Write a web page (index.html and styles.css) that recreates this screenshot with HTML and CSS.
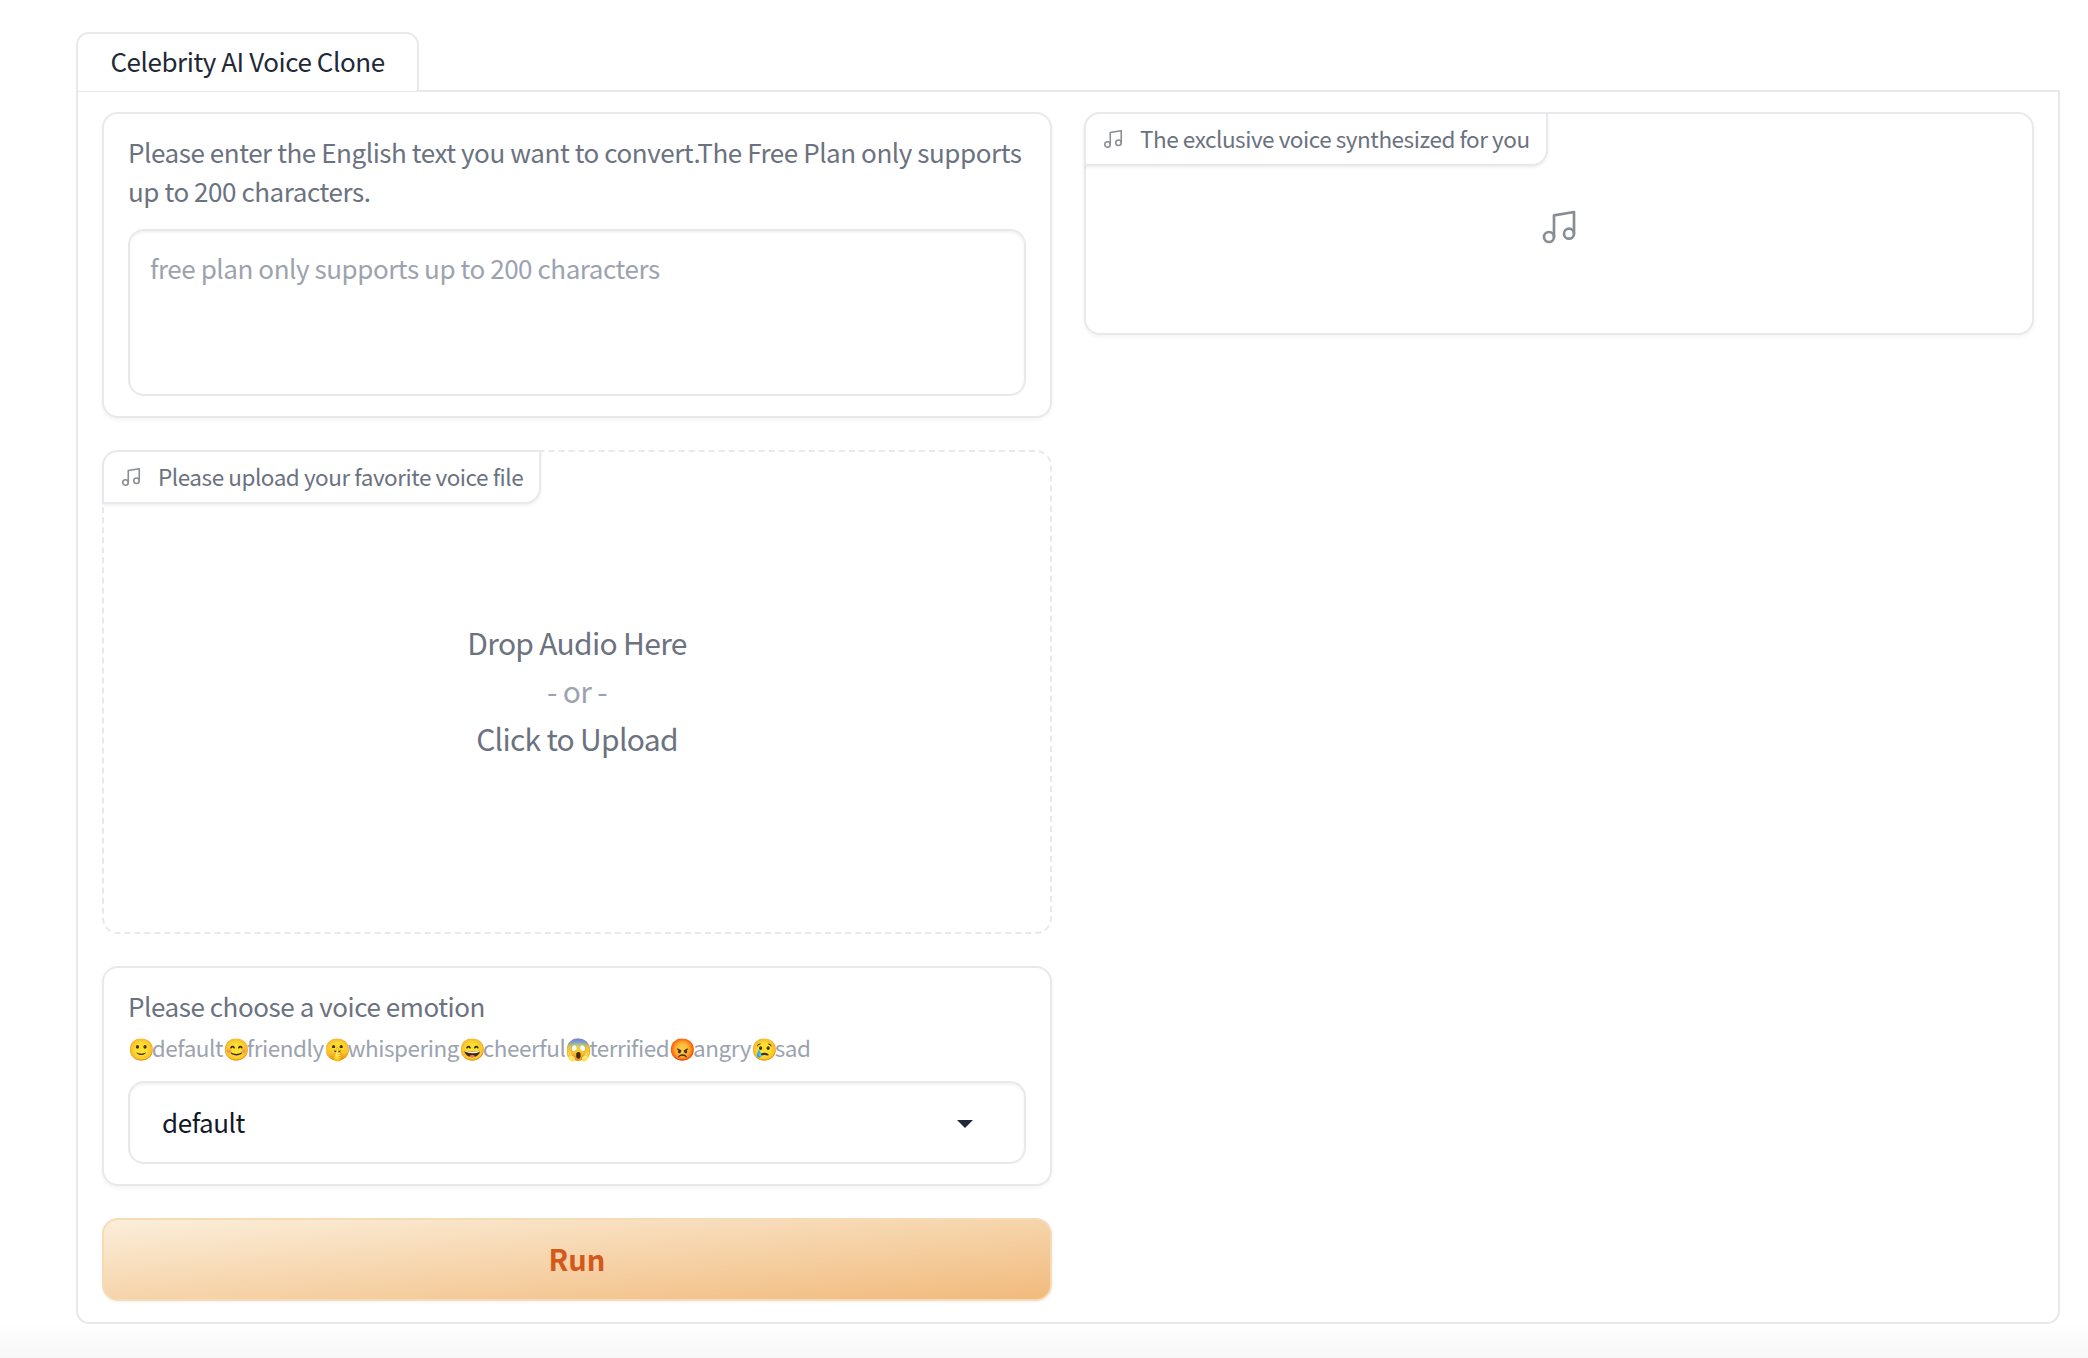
FILE: index.html
```html
<!DOCTYPE html>
<html lang="en">
<head>
<meta charset="utf-8">
<title>Celebrity AI Voice Clone</title>
<link rel="stylesheet" href="styles.css">
</head>
<body>
<main class="app">
  <nav class="tabs"><button class="tab">Celebrity AI Voice Clone</button></nav>
  <section class="panel">
    <div class="col">
      <div class="card text-card">
        <label class="label">Please enter the English text you want to convert.The Free Plan only supports up to 200 characters.</label>
        <textarea class="input" placeholder="free plan only supports up to 200 characters"></textarea>
      </div>
      <div class="card upload">
        <div class="badge">
          <svg class="note-sm" viewBox="0 0 24 24"><path d="M9 18V5l12-2v13"/><circle cx="6" cy="18" r="3"/><circle cx="18" cy="16" r="3"/></svg>
          <span>Please upload your favorite voice file</span>
        </div>
        <div class="drop">
          <div>Drop Audio Here</div>
          <div class="or">- or -</div>
          <div>Click to Upload</div>
        </div>
      </div>
      <div class="card emotion">
        <div class="label">Please choose a voice emotion</div>
        <div class="info"><span class="emoji">🙂</span>default<span class="emoji">😊</span>friendly<span class="emoji">🤫</span>whispering<span class="emoji">😄</span>cheerful<span class="emoji">😱</span>terrified<span class="emoji">😡</span>angry<span class="emoji">😢</span>sad</div>
        <div class="select"><span>default</span><i class="caret"></i></div>
      </div>
      <button class="run">Run</button>
    </div>
    <div class="col">
      <div class="card output">
        <div class="badge">
          <svg class="note-sm" viewBox="0 0 24 24"><path d="M9 18V5l12-2v13"/><circle cx="6" cy="18" r="3"/><circle cx="18" cy="16" r="3"/></svg>
          <span>The exclusive voice synthesized for you</span>
        </div>
        <div class="empty">
          <svg class="note-lg" viewBox="0 0 24 24"><path d="M9 18V5l12-2v13"/><circle cx="6" cy="18" r="3"/><circle cx="18" cy="16" r="3"/></svg>
        </div>
      </div>
    </div>
  </section>
</main>
</body>
</html>
```
FILE: styles.css
```css
* { box-sizing: border-box; }
html, body { margin: 0; height: 100%; }
body {
  height: 1358px;
  overflow: hidden;
  background: linear-gradient(to bottom, #fff 0, #fff 1323px, #f7f7f7 1358px);
  font-family: "Noto Sans CJK SC", "Noto Sans", sans-serif;
  color: #6b7280;
}
.app { padding: 32px 28px 0 76px; }
.tabs { display: flex; height: 58px; }
.tab {
  width: 343px;
  height: 59px;
  padding: 0 0 3px;
  border: 2px solid #e8e9ec;
  border-bottom: 0;
  border-radius: 13px 13px 0 0;
  background: #fff;
  color: #1f2937;
  font: 400 26px/50px "Noto Sans CJK SC", sans-serif;
  letter-spacing: -.44px;
  position: relative;
  z-index: 1;
}
.panel {
  display: grid;
  grid-template-columns: 1fr 1fr;
  gap: 32px;
  height: 1234px;
  padding: 20px 24px;
  border: 2px solid #e8e9ec;
  border-radius: 0 0 13px 13px;
  background: #fff;
}
.col { display: flex; flex-direction: column; gap: 32px; }
.card {
  border: 2px solid #e8e9ec;
  border-radius: 16px;
  background: #fff;
  box-shadow: 0 2px 4px rgba(0, 0, 0, .05);
}
.text-card { height: 306px; padding: 18px 24px 20px; }
.label { display: block; font-size: 26px; line-height: 39px; letter-spacing: -.44px; color: #6b7280; }
.input {
  display: block;
  width: 100%;
  height: 167px;
  margin-top: 19px;
  padding: 17px 20px;
  border: 2px solid #e8e9ec;
  border-radius: 16px;
  outline: 0;
  resize: none;
  background: #fff;
  box-shadow: inset 0 2px 3px rgba(0, 0, 0, .05);
  font: 400 26px/39px "Noto Sans CJK SC", sans-serif;
  letter-spacing: -.44px;
}
.input::placeholder { color: #9ca3af; opacity: 1; }
.upload {
  display: flex;
  flex-direction: column;
  height: 484px;
  border-style: dashed;
  box-shadow: none;
}
.badge {
  display: flex;
  align-items: center;
  gap: 16px;
  align-self: flex-start;
  width: max-content;
  height: 54px;
  margin: -2px 0 0 -2px;
  padding: 0 16px 0 16px;
  border: 2px solid #e8e9ec;
  border-radius: 16px 0 16px 0;
  background: #fff;
  box-shadow: 0 2px 3px rgba(0, 0, 0, .06);
  font-size: 22.5px;
  letter-spacing: -.46px;
  color: #6b7280;
}
.badge span { position: relative; top: -1px; }
.note-sm, .note-lg { fill: none; stroke: #8a8d93; stroke-width: 1.7; stroke-linecap: round; stroke-linejoin: round; }
.note-sm { width: 22px; height: 22px; }
.note-lg { width: 40px; height: 40px; stroke-width: 1.6; }
.drop {
  flex: 1;
  display: flex;
  flex-direction: column;
  align-items: center;
  justify-content: center;
  margin-top: -56px;
  font-size: 30px;
  letter-spacing: -.7px;
  line-height: 48px;
  color: #6b7280;
}
.or { color: #9ca3af; }
.emotion { height: 220px; padding: 18px 24px 20px; }
.info { font-size: 22.5px; letter-spacing: -.46px; line-height: 34px; color: #9ca3af; margin-top: 5px; white-space: nowrap; }
.emoji { font-size: 21.5px; letter-spacing: -3.2px; }
.select {
  display: flex;
  align-items: center;
  justify-content: space-between;
  height: 83px;
  margin-top: 16px;
  padding: 0 51px 3px 32px;
  border: 2px solid #e8e9ec;
  border-radius: 16px;
  box-shadow: inset 0 2px 3px rgba(0, 0, 0, .05);
  font-size: 26px;
  letter-spacing: -.44px;
  color: #111827;
}
.caret {
  width: 0;
  height: 0;
  border-left: 8px solid transparent;
  border-right: 8px solid transparent;
  border-top: 8px solid #1f2937;
  margin-top: 6px;
}
.run {
  height: 83px;
  padding: 0 0 2px;
  border: 2px solid #f5dcb6;
  border-radius: 16px;
  background: linear-gradient(to bottom right, #fbeeda, #f1ba7c);
  box-shadow: 0 1px 3px rgba(0, 0, 0, .06);
  color: #d4581c;
  font: 700 29px/1 "Noto Sans CJK SC", sans-serif;
}
.output { height: 223px; display: flex; flex-direction: column; }
.empty { flex: 1; display: flex; justify-content: center; padding-top: 41px; }
```
